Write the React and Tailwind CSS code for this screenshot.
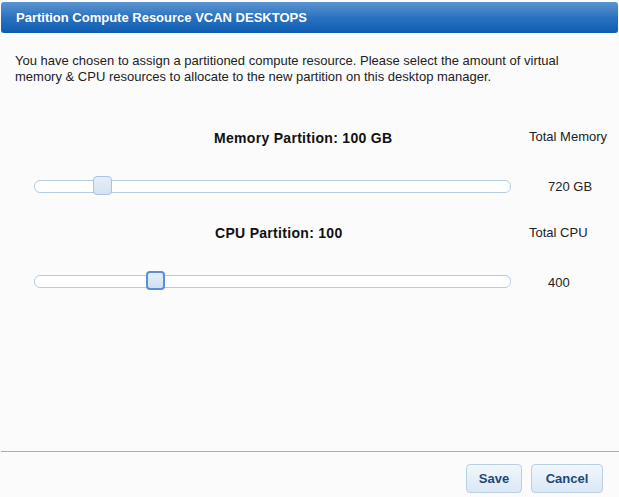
import { useState } from 'react';

function Slider({ left, focused }) {
  return (
    <div className="relative h-[13px] w-[477px] rounded-[6px] border border-[#b7cbe0] bg-white">
      <div
        className={
          focused
            ? 'absolute top-[-5px] h-[19px] w-[19px] rounded-[4px] border-2 border-[#5b8ed3] bg-gradient-to-b from-[#e3eefb] to-[#cfe0f5]'
            : 'absolute top-[-5px] h-[19px] w-[19px] rounded-[4px] border border-[#aac3df] bg-gradient-to-b from-[#e6eef8] to-[#d5e3f2]'
        }
        style={{ left }}
      />
    </div>
  );
}

export default function App() {
  const [mem] = useState(100);
  const [cpu] = useState(100);

  return (
    <div className="flex h-[497px] w-[619px] flex-col bg-[#fbfbfb] font-['Liberation_Sans',Arial,sans-serif]">
      <div className="mx-[1px] mt-[2px] flex h-[31px] items-center rounded-[3px] bg-gradient-to-b from-[#5b94cf] via-[#2a72bf] to-[#0a5db1] pl-[15px]">
        <h1 className="text-[13px] font-bold text-white">Partition Compute Resource VCAN DESKTOPS</h1>
      </div>

      <p className="mt-[20px] w-[600px] px-[15px] text-[13px] leading-[16px] text-[#222]">
        You have chosen to assign a partitioned compute resource. Please select the amount of virtual
        memory &amp; CPU resources to allocate to the new partition on this desktop manager.
      </p>

      <div className="mt-[45px] flex">
        <div className="w-[529px] pl-[34px]">
          <div className="pl-[180px] text-[14px] font-bold leading-[16px] tracking-[0.3px] text-[#111]">
            Memory Partition: {mem} GB
          </div>
          <div className="mt-[34px]">
            <Slider left={58} />
          </div>
          <div className="mt-[32px] pl-[181px] text-[14px] font-bold leading-[16px] tracking-[0.3px] text-[#111]">
            CPU Partition: {cpu}
          </div>
          <div className="mt-[34px]">
            <Slider left={111} focused />
          </div>
        </div>
        <div className="flex flex-col text-[13px] leading-[16px] text-[#222]">
          <div className="-mt-[1px]">Total Memory</div>
          <div className="mt-[34px] pl-[19px]">720 GB</div>
          <div className="mt-[30px]">Total CPU</div>
          <div className="mt-[34px] pl-[19px]">400</div>
        </div>
      </div>

      <div className="mt-auto ml-[1px] border-t border-[#8fb9c9]" />
      <div className="flex h-[45px] items-start justify-end gap-[9px] pr-[16px] pt-[12px]">
        <button className="h-[29px] w-[56px] rounded-[4px] border border-[#b9cfe4] bg-gradient-to-b from-[#f1f6fc] to-[#dbe8f5] text-[13px] font-bold text-[#1d4877]">
          Save
        </button>
        <button className="h-[29px] w-[72px] rounded-[4px] border border-[#b9cfe4] bg-gradient-to-b from-[#f1f6fc] to-[#dbe8f5] text-[13px] font-bold text-[#1d4877]">
          Cancel
        </button>
      </div>
    </div>
  );
}
